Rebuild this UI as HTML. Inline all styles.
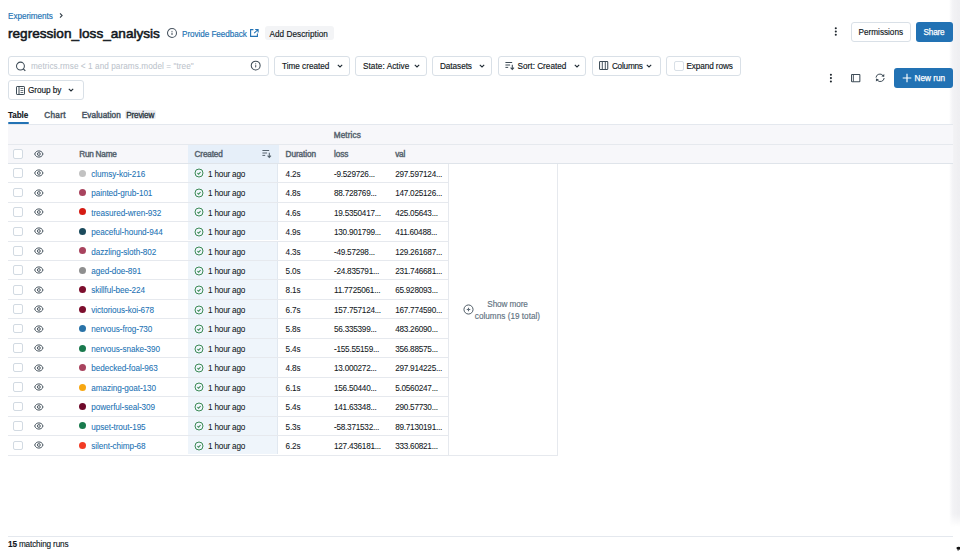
<!DOCTYPE html>
<html><head><meta charset="utf-8">
<style>
html,body{margin:0;padding:0;background:#fff;width:960px;height:551px;overflow:hidden;}
body{position:relative;font-family:"Liberation Sans",sans-serif;}
.t{position:absolute;line-height:1;white-space:nowrap;}
.r{position:absolute;}
svg.r{overflow:visible;}
</style></head><body>
<div class="r" style="left:948.50px;top:0.00px;width:11.50px;height:527.00px;background:linear-gradient(to right, rgba(240,240,243,0), rgba(240,240,243,0.85) 35%, rgba(238,238,241,1));-webkit-mask-image:linear-gradient(to bottom, #000 97.5%, transparent);mask-image:linear-gradient(to bottom, #000 97.5%, transparent);"></div>
<div class="t" style="left:8.00px;top:13.36px;font-size:8.2px;color:#2272b4;font-weight:400;letter-spacing:-0.059px;-webkit-text-stroke:0.15px #2272b4;">Experiments</div>
<svg class="r" style="left:57.5px;top:12px" width="6" height="7" viewBox="0 0 6 7"><path d="M2 1.4 L4.1 3.5 L2 5.6" fill="none" stroke="#36414b" stroke-width="1.1"/></svg>
<div class="t" style="left:8.00px;top:26.69px;font-size:13.6px;color:#11171c;font-weight:400;letter-spacing:0.001px;-webkit-text-stroke:0.55px #11171c;">regression_loss_analysis</div>
<svg class="r" style="left:165.9px;top:26.8px" width="12" height="12" viewBox="0 0 12 12"><circle cx="6" cy="6" r="4.5" fill="none" stroke="#4a5662" stroke-width="1.05"/><rect x="5.45" y="5.5" width="1.1" height="2.5" rx="0.5" fill="#4a5662"/><circle cx="6" cy="4.3" r="0.6" fill="#4a5662"/></svg>
<div class="t" style="left:182.00px;top:30.86px;font-size:8.2px;color:#2272b4;font-weight:400;letter-spacing:-0.076px;-webkit-text-stroke:0.15px #2272b4;">Provide Feedback</div>
<svg class="r" style="left:249px;top:27.7px" width="10" height="10" viewBox="0 0 10 10"><path d="M4.4 1.6 H1.6 V8.4 H8.4 V5.6" fill="none" stroke="#2272b4" stroke-width="1.1"/><path d="M6.2 1.5 H9.1 V4.4 M8.9 1.7 L5.2 5.2" fill="none" stroke="#2272b4" stroke-width="1.1"/></svg>
<div class="r" style="left:265.00px;top:26.00px;width:68.50px;height:13.70px;background:#f3f4f6;border-radius:3px;"></div>
<div class="t" style="left:269.50px;top:30.86px;font-size:8.2px;color:#11171c;font-weight:400;letter-spacing:0.043px;-webkit-text-stroke:0.15px #11171c;">Add Description</div>
<svg class="r" style="left:830px;top:22px" width="12" height="20" viewBox="0 0 12 20"><circle cx="5.8" cy="6.2" r="1.05" fill="#1f272e"/><circle cx="5.8" cy="9.45" r="1.05" fill="#1f272e"/><circle cx="5.8" cy="12.7" r="1.05" fill="#1f272e"/></svg>
<div class="r" style="left:850.60px;top:22.00px;width:60.10px;height:19.90px;border:1px solid #d9e0e7;border-radius:3px;box-sizing:border-box;background:#fff;"></div>
<div class="t" style="left:858.60px;top:28.66px;font-size:8.2px;color:#11171c;font-weight:400;letter-spacing:-0.015px;-webkit-text-stroke:0.15px #11171c;">Permissions</div>
<div class="r" style="left:915.80px;top:22.00px;width:37.00px;height:19.90px;background:#2272b4;border-radius:3px;"></div>
<div class="t" style="left:923.50px;top:28.66px;font-size:8.2px;color:#fff;font-weight:400;letter-spacing:-0.173px;-webkit-text-stroke:0.25px #fff;">Share</div>
<div class="r" style="left:8.00px;top:56.30px;width:260.80px;height:19.70px;border:1px solid #d9e0e7;border-radius:3px;box-sizing:border-box;background:#fff;"></div>
<svg class="r" style="left:15px;top:60.5px" width="12" height="12" viewBox="0 0 12 12"><circle cx="5.45" cy="5.05" r="3.95" fill="none" stroke="#3e4c57" stroke-width="1.05"/><path d="M8.3 7.9 L10.3 9.9" stroke="#3e4c57" stroke-width="1.2"/></svg>
<div class="t" style="left:30.90px;top:62.56px;font-size:8.2px;color:#bcc4cc;font-weight:400;letter-spacing:0.066px;-webkit-text-stroke:0.05px #bcc4cc;">metrics.rmse &lt; 1 and params.model = "tree"</div>
<svg class="r" style="left:250.3px;top:59.5px" width="11" height="11" viewBox="0 0 11 11"><circle cx="5.7" cy="5.6" r="4.45" fill="none" stroke="#3e4c57" stroke-width="1.05"/><rect x="5.2" y="5.0" width="1.0" height="2.4" rx="0.4" fill="#3e4c57"/><circle cx="5.7" cy="3.85" r="0.55" fill="#3e4c57"/></svg>
<div class="r" style="left:273.80px;top:56.30px;width:76.40px;height:19.70px;border:1px solid #d9e0e7;border-radius:3px;box-sizing:border-box;background:#fff;"></div>
<div class="t" style="left:282.00px;top:62.56px;font-size:8.2px;color:#11171c;font-weight:400;letter-spacing:-0.015px;-webkit-text-stroke:0.15px #11171c;">Time created</div>
<svg class="r" style="left:336.50px;top:64.00px" width="6" height="4" viewBox="0 0 6 4"><path d="M0.8 0.9 L3 3.0 L5.2 0.9" fill="none" stroke="#1f2a33" stroke-width="1.1"/></svg>
<div class="r" style="left:355.00px;top:56.30px;width:72.30px;height:19.70px;border:1px solid #d9e0e7;border-radius:3px;box-sizing:border-box;background:#fff;"></div>
<div class="t" style="left:363.00px;top:62.56px;font-size:8.2px;color:#11171c;font-weight:400;letter-spacing:0.067px;-webkit-text-stroke:0.15px #11171c;">State: Active</div>
<svg class="r" style="left:413.80px;top:64.00px" width="6" height="4" viewBox="0 0 6 4"><path d="M0.8 0.9 L3 3.0 L5.2 0.9" fill="none" stroke="#1f2a33" stroke-width="1.1"/></svg>
<div class="r" style="left:432.40px;top:56.30px;width:59.90px;height:19.70px;border:1px solid #d9e0e7;border-radius:3px;box-sizing:border-box;background:#fff;"></div>
<div class="t" style="left:440.00px;top:62.56px;font-size:8.2px;color:#11171c;font-weight:400;letter-spacing:-0.050px;-webkit-text-stroke:0.15px #11171c;">Datasets</div>
<svg class="r" style="left:479.20px;top:64.00px" width="6" height="4" viewBox="0 0 6 4"><path d="M0.8 0.9 L3 3.0 L5.2 0.9" fill="none" stroke="#1f2a33" stroke-width="1.1"/></svg>
<div class="r" style="left:497.60px;top:56.30px;width:88.80px;height:19.70px;border:1px solid #d9e0e7;border-radius:3px;box-sizing:border-box;background:#fff;"></div>
<svg class="r" style="left:505px;top:61px" width="11" height="10" viewBox="0 0 11 10"><path d="M0.8 1.5 H6.75 M0.8 4.0 H4.7 M0.8 6.4 H2.8" stroke="#3e4c57" stroke-width="1" stroke-linecap="round"/><path d="M7.3 3.8 V8.4 M5.6 6.7 L7.3 8.4 L9.0 6.7" fill="none" stroke="#3e4c57" stroke-width="1.05"/></svg>
<div class="t" style="left:517.60px;top:62.56px;font-size:8.2px;color:#11171c;font-weight:400;letter-spacing:0.004px;-webkit-text-stroke:0.15px #11171c;">Sort: Created</div>
<svg class="r" style="left:573.50px;top:64.00px" width="6" height="4" viewBox="0 0 6 4"><path d="M0.8 0.9 L3 3.0 L5.2 0.9" fill="none" stroke="#1f2a33" stroke-width="1.1"/></svg>
<div class="r" style="left:591.60px;top:56.30px;width:69.60px;height:19.70px;border:1px solid #d9e0e7;border-radius:3px;box-sizing:border-box;background:#fff;"></div>
<svg class="r" style="left:599.4px;top:61.2px" width="10" height="10" viewBox="0 0 10 10"><rect x="0.55" y="0.55" width="8.2" height="7.9" rx="0.6" fill="none" stroke="#3e4c57" stroke-width="1.05"/><path d="M3.3 0.6 V8.4 M6.3 0.6 V8.4" stroke="#3e4c57" stroke-width="0.95"/></svg>
<div class="t" style="left:611.90px;top:62.56px;font-size:8.2px;color:#11171c;font-weight:400;letter-spacing:-0.208px;-webkit-text-stroke:0.15px #11171c;">Columns</div>
<svg class="r" style="left:645.80px;top:64.00px" width="6" height="4" viewBox="0 0 6 4"><path d="M0.8 0.9 L3 3.0 L5.2 0.9" fill="none" stroke="#1f2a33" stroke-width="1.1"/></svg>
<div class="r" style="left:666.00px;top:56.30px;width:74.50px;height:19.70px;border:1px solid #d9e0e7;border-radius:3px;box-sizing:border-box;background:#fff;"></div>
<div class="r" style="left:674.20px;top:61.00px;width:9.50px;height:9.50px;border:1px solid #d9e0e7;border-radius:2px;box-sizing:border-box;background:#fff;"></div>
<div class="t" style="left:686.40px;top:62.56px;font-size:8.2px;color:#11171c;font-weight:400;letter-spacing:-0.080px;-webkit-text-stroke:0.15px #11171c;">Expand rows</div>
<div class="r" style="left:8.00px;top:80.20px;width:75.60px;height:20.00px;border:1px solid #d9e0e7;border-radius:3px;box-sizing:border-box;background:#fff;"></div>
<svg class="r" style="left:16px;top:86px" width="9" height="9" viewBox="0 0 9 9"><rect x="0.5" y="0.5" width="8" height="8" rx="0.6" fill="none" stroke="#3e4c57" stroke-width="1"/><path d="M3 0.5 V8.5" stroke="#3e4c57" stroke-width="1"/><path d="M4.5 2.5 H7.3 M4.5 4.5 H7.3 M4.5 6.5 H7.3" stroke="#3e4c57" stroke-width="0.8"/></svg>
<div class="t" style="left:28.00px;top:87.26px;font-size:8.2px;color:#11171c;font-weight:400;letter-spacing:-0.035px;-webkit-text-stroke:0.15px #11171c;">Group by</div>
<svg class="r" style="left:68.40px;top:88.40px" width="6" height="4" viewBox="0 0 6 4"><path d="M0.8 0.9 L3 3.0 L5.2 0.9" fill="none" stroke="#1f2a33" stroke-width="1.1"/></svg>
<svg class="r" style="left:825px;top:68px" width="12" height="20" viewBox="0 0 12 20"><circle cx="5.9" cy="6.7" r="1.05" fill="#1f272e"/><circle cx="5.9" cy="10.1" r="1.05" fill="#1f272e"/><circle cx="5.9" cy="13.5" r="1.05" fill="#1f272e"/></svg>
<svg class="r" style="left:850.6px;top:74.2px" width="10" height="10" viewBox="0 0 10 10"><rect x="0.55" y="0.55" width="8.3" height="7.1" rx="0.5" fill="none" stroke="#3e4c57" stroke-width="1.05"/><path d="M2.4 0.5 V7.7" stroke="#3e4c57" stroke-width="0.9"/></svg>
<svg class="r" style="left:874.5px;top:73px" width="10" height="10" viewBox="0 0 10 10"><path d="M1.0 4.6 A3.9 3.9 0 0 1 8.0 2.6" fill="none" stroke="#3e4c57" stroke-width="1"/><path d="M9.3 1.0 L9.2 4.0 L6.3 3.2 Z" fill="#3e4c57"/><path d="M9.2 5.0 A3.9 3.9 0 0 1 2.2 7.0" fill="none" stroke="#3e4c57" stroke-width="1"/><path d="M0.9 8.6 L1.0 5.6 L3.9 6.4 Z" fill="#3e4c57"/></svg>
<div class="r" style="left:894.00px;top:68.30px;width:58.70px;height:19.70px;background:#2272b4;border-radius:3px;"></div>
<svg class="r" style="left:902px;top:73px" width="10" height="10" viewBox="0 0 10 10"><path d="M5 0.7 V9.3 M0.7 5 H9.3" stroke="#fff" stroke-width="1.15"/></svg>
<div class="t" style="left:914.50px;top:74.86px;font-size:8.2px;color:#fff;font-weight:400;letter-spacing:0.009px;-webkit-text-stroke:0.25px #fff;">New run</div>
<div class="t" style="left:8.00px;top:111.66px;font-size:8.2px;color:#11171c;font-weight:700;letter-spacing:-0.132px;-webkit-text-stroke:0.1px #11171c;">Table</div>
<div class="r" style="left:8.00px;top:121.70px;width:20.50px;height:2.10px;background:#2272b4;border-radius:1px;"></div>
<div class="t" style="left:44.30px;top:111.66px;font-size:8.2px;color:#4b5864;font-weight:400;letter-spacing:0.288px;-webkit-text-stroke:0.45px #4b5864;">Chart</div>
<div class="t" style="left:81.80px;top:111.66px;font-size:8.2px;color:#4b5864;font-weight:400;letter-spacing:0.078px;-webkit-text-stroke:0.45px #4b5864;">Evaluation</div>
<div class="r" style="left:124.90px;top:109.90px;width:30.90px;height:9.00px;background:#eceef1;border-radius:2px;"></div>
<div class="t" style="left:126.20px;top:111.66px;font-size:8.2px;color:#27313a;font-weight:400;letter-spacing:-0.165px;-webkit-text-stroke:0.3px #27313a;">Preview</div>
<div class="r" style="left:8.00px;top:123.70px;width:945.00px;height:1.00px;background:#e4e8ee;"></div>
<div class="r" style="left:8.00px;top:124.70px;width:945.00px;height:19.70px;background:#f7f7fa;"></div>
<div class="r" style="left:8.00px;top:144.40px;width:945.00px;height:0.80px;background:#e6e9ee;"></div>
<div class="r" style="left:8.00px;top:145.20px;width:945.00px;height:17.90px;background:#f7f7fa;"></div>
<div class="r" style="left:188.20px;top:145.20px;width:90.40px;height:17.50px;background:#e6eff9;"></div>
<div class="r" style="left:8.00px;top:162.70px;width:945.00px;height:1.00px;background:#dfe4ea;"></div>
<div class="t" style="left:333.75px;top:132.16px;font-size:8.2px;color:#56636e;font-weight:400;letter-spacing:0.099px;-webkit-text-stroke:0.42px #56636e;">Metrics</div>
<div class="r" style="left:13.00px;top:149.10px;width:9.50px;height:9.70px;border:1px solid #d2dae2;border-radius:2px;box-sizing:border-box;background:#fff;"></div>
<svg class="r" style="left:34px;top:150px" width="10" height="8" viewBox="0 0 10 8"><path d="M0.7 4 C1.45 1.75 3.05 0.95 4.85 0.95 C6.65 0.95 8.25 1.75 9.0 4 C8.25 6.25 6.65 7.05 4.85 7.05 C3.05 7.05 1.45 6.25 0.7 4 Z" fill="none" stroke="#3e4c57" stroke-width="1"/><circle cx="4.85" cy="4" r="1.4" fill="none" stroke="#3e4c57" stroke-width="0.95"/></svg>
<div class="t" style="left:79.20px;top:151.36px;font-size:8.2px;color:#56636e;font-weight:400;letter-spacing:-0.220px;-webkit-text-stroke:0.42px #56636e;">Run Name</div>
<div class="t" style="left:194.60px;top:151.36px;font-size:8.2px;color:#56636e;font-weight:400;letter-spacing:-0.149px;-webkit-text-stroke:0.42px #56636e;">Created</div>
<svg class="r" style="left:261.6px;top:148.8px" width="11" height="10" viewBox="0 0 11 10"><path d="M0.8 1.5 H6.75 M0.8 4.0 H4.7 M0.8 6.4 H2.8" stroke="#56636e" stroke-width="1" stroke-linecap="round"/><path d="M7.3 3.8 V8.4 M5.6 6.7 L7.3 8.4 L9.0 6.7" fill="none" stroke="#56636e" stroke-width="1.05"/></svg>
<div class="t" style="left:285.60px;top:151.36px;font-size:8.2px;color:#56636e;font-weight:400;letter-spacing:-0.057px;-webkit-text-stroke:0.42px #56636e;">Duration</div>
<div class="t" style="left:334.00px;top:151.36px;font-size:8.2px;color:#56636e;font-weight:400;letter-spacing:-0.099px;-webkit-text-stroke:0.42px #56636e;">loss</div>
<div class="t" style="left:395.20px;top:151.36px;font-size:8.2px;color:#56636e;font-weight:400;letter-spacing:-0.220px;-webkit-text-stroke:0.42px #56636e;">val</div>
<div class="r" style="left:188.20px;top:163.70px;width:89.30px;height:18.45px;background:#eff5fb;"></div>
<div class="r" style="left:277.10px;top:163.70px;width:0.80px;height:18.45px;background:#e1e8f0;"></div>
<div class="r" style="left:8.00px;top:182.15px;width:440.40px;height:1.00px;background:#e6e9ee;"></div>
<div class="r" style="left:13.00px;top:168.18px;width:9.50px;height:9.70px;border:1px solid #d2dae2;border-radius:2px;box-sizing:border-box;background:#fff;"></div>
<svg class="r" style="left:34px;top:169px" width="10" height="8" viewBox="0 0 10 8"><path d="M0.7 4 C1.45 1.75 3.05 0.95 4.85 0.95 C6.65 0.95 8.25 1.75 9.0 4 C8.25 6.25 6.65 7.05 4.85 7.05 C3.05 7.05 1.45 6.25 0.7 4 Z" fill="none" stroke="#3e4c57" stroke-width="1"/><circle cx="4.85" cy="4" r="1.4" fill="none" stroke="#3e4c57" stroke-width="0.95"/></svg>
<div class="r" style="left:79.00px;top:169.58px;width:7.00px;height:7.00px;background:#c2c2c2;border-radius:50%;"></div>
<div class="t" style="left:91.25px;top:170.74px;font-size:8.2px;color:#2272b4;font-weight:400;letter-spacing:-0.080px;-webkit-text-stroke:0.06px #2272b4;">clumsy-koi-216</div>
<svg class="r" style="left:193.60px;top:168.48px" width="10" height="10" viewBox="0 0 10 10"><circle cx="5" cy="5" r="4.0" fill="none" stroke="#3b8a55" stroke-width="1"/><path d="M3.4 5.2 L4.6 6.2 L6.6 4.0" fill="none" stroke="#3b8a55" stroke-width="1.05"/></svg>
<div class="t" style="left:208.00px;top:170.74px;font-size:8.2px;color:#11171c;font-weight:400;letter-spacing:-0.200px;-webkit-text-stroke:0.06px #11171c;">1 hour ago</div>
<div class="t" style="left:285.60px;top:170.74px;font-size:8.2px;color:#11171c;font-weight:400;letter-spacing:-0.200px;-webkit-text-stroke:0.06px #11171c;">4.2s</div>
<div class="t" style="left:334.00px;top:170.74px;font-size:8.2px;color:#11171c;font-weight:400;letter-spacing:-0.250px;-webkit-text-stroke:0.06px #11171c;">-9.529726...</div>
<div class="t" style="left:395.20px;top:170.74px;font-size:8.2px;color:#11171c;font-weight:400;letter-spacing:-0.250px;-webkit-text-stroke:0.06px #11171c;">297.597124...</div>
<div class="r" style="left:188.20px;top:183.15px;width:89.30px;height:18.45px;background:#eff5fb;"></div>
<div class="r" style="left:277.10px;top:183.15px;width:0.80px;height:18.45px;background:#e1e8f0;"></div>
<div class="r" style="left:8.00px;top:201.61px;width:440.40px;height:1.00px;background:#e6e9ee;"></div>
<div class="r" style="left:13.00px;top:187.63px;width:9.50px;height:9.70px;border:1px solid #d2dae2;border-radius:2px;box-sizing:border-box;background:#fff;"></div>
<svg class="r" style="left:34px;top:189px" width="10" height="8" viewBox="0 0 10 8"><path d="M0.7 4 C1.45 1.75 3.05 0.95 4.85 0.95 C6.65 0.95 8.25 1.75 9.0 4 C8.25 6.25 6.65 7.05 4.85 7.05 C3.05 7.05 1.45 6.25 0.7 4 Z" fill="none" stroke="#3e4c57" stroke-width="1"/><circle cx="4.85" cy="4" r="1.4" fill="none" stroke="#3e4c57" stroke-width="0.95"/></svg>
<div class="r" style="left:79.00px;top:189.03px;width:7.00px;height:7.00px;background:#a8435e;border-radius:50%;"></div>
<div class="t" style="left:91.25px;top:190.19px;font-size:8.2px;color:#2272b4;font-weight:400;letter-spacing:-0.080px;-webkit-text-stroke:0.06px #2272b4;">painted-grub-101</div>
<svg class="r" style="left:193.60px;top:187.93px" width="10" height="10" viewBox="0 0 10 10"><circle cx="5" cy="5" r="4.0" fill="none" stroke="#3b8a55" stroke-width="1"/><path d="M3.4 5.2 L4.6 6.2 L6.6 4.0" fill="none" stroke="#3b8a55" stroke-width="1.05"/></svg>
<div class="t" style="left:208.00px;top:190.19px;font-size:8.2px;color:#11171c;font-weight:400;letter-spacing:-0.200px;-webkit-text-stroke:0.06px #11171c;">1 hour ago</div>
<div class="t" style="left:285.60px;top:190.19px;font-size:8.2px;color:#11171c;font-weight:400;letter-spacing:-0.200px;-webkit-text-stroke:0.06px #11171c;">4.8s</div>
<div class="t" style="left:334.00px;top:190.19px;font-size:8.2px;color:#11171c;font-weight:400;letter-spacing:-0.250px;-webkit-text-stroke:0.06px #11171c;">88.728769...</div>
<div class="t" style="left:395.20px;top:190.19px;font-size:8.2px;color:#11171c;font-weight:400;letter-spacing:-0.250px;-webkit-text-stroke:0.06px #11171c;">147.025126...</div>
<div class="r" style="left:188.20px;top:202.61px;width:89.30px;height:18.45px;background:#eff5fb;"></div>
<div class="r" style="left:277.10px;top:202.61px;width:0.80px;height:18.45px;background:#e1e8f0;"></div>
<div class="r" style="left:8.00px;top:221.06px;width:440.40px;height:1.00px;background:#e6e9ee;"></div>
<div class="r" style="left:13.00px;top:207.08px;width:9.50px;height:9.70px;border:1px solid #d2dae2;border-radius:2px;box-sizing:border-box;background:#fff;"></div>
<svg class="r" style="left:34px;top:208px" width="10" height="8" viewBox="0 0 10 8"><path d="M0.7 4 C1.45 1.75 3.05 0.95 4.85 0.95 C6.65 0.95 8.25 1.75 9.0 4 C8.25 6.25 6.65 7.05 4.85 7.05 C3.05 7.05 1.45 6.25 0.7 4 Z" fill="none" stroke="#3e4c57" stroke-width="1"/><circle cx="4.85" cy="4" r="1.4" fill="none" stroke="#3e4c57" stroke-width="0.95"/></svg>
<div class="r" style="left:79.00px;top:208.48px;width:7.00px;height:7.00px;background:#d51c14;border-radius:50%;"></div>
<div class="t" style="left:91.25px;top:209.64px;font-size:8.2px;color:#2272b4;font-weight:400;letter-spacing:-0.080px;-webkit-text-stroke:0.06px #2272b4;">treasured-wren-932</div>
<svg class="r" style="left:193.60px;top:207.38px" width="10" height="10" viewBox="0 0 10 10"><circle cx="5" cy="5" r="4.0" fill="none" stroke="#3b8a55" stroke-width="1"/><path d="M3.4 5.2 L4.6 6.2 L6.6 4.0" fill="none" stroke="#3b8a55" stroke-width="1.05"/></svg>
<div class="t" style="left:208.00px;top:209.64px;font-size:8.2px;color:#11171c;font-weight:400;letter-spacing:-0.200px;-webkit-text-stroke:0.06px #11171c;">1 hour ago</div>
<div class="t" style="left:285.60px;top:209.64px;font-size:8.2px;color:#11171c;font-weight:400;letter-spacing:-0.200px;-webkit-text-stroke:0.06px #11171c;">4.6s</div>
<div class="t" style="left:334.00px;top:209.64px;font-size:8.2px;color:#11171c;font-weight:400;letter-spacing:-0.250px;-webkit-text-stroke:0.06px #11171c;">19.5350417...</div>
<div class="t" style="left:395.20px;top:209.64px;font-size:8.2px;color:#11171c;font-weight:400;letter-spacing:-0.250px;-webkit-text-stroke:0.06px #11171c;">425.05643...</div>
<div class="r" style="left:188.20px;top:222.06px;width:89.30px;height:18.45px;background:#eff5fb;"></div>
<div class="r" style="left:277.10px;top:222.06px;width:0.80px;height:18.45px;background:#e1e8f0;"></div>
<div class="r" style="left:8.00px;top:240.51px;width:440.40px;height:1.00px;background:#e6e9ee;"></div>
<div class="r" style="left:13.00px;top:226.54px;width:9.50px;height:9.70px;border:1px solid #d2dae2;border-radius:2px;box-sizing:border-box;background:#fff;"></div>
<svg class="r" style="left:34px;top:227px" width="10" height="8" viewBox="0 0 10 8"><path d="M0.7 4 C1.45 1.75 3.05 0.95 4.85 0.95 C6.65 0.95 8.25 1.75 9.0 4 C8.25 6.25 6.65 7.05 4.85 7.05 C3.05 7.05 1.45 6.25 0.7 4 Z" fill="none" stroke="#3e4c57" stroke-width="1"/><circle cx="4.85" cy="4" r="1.4" fill="none" stroke="#3e4c57" stroke-width="0.95"/></svg>
<div class="r" style="left:79.00px;top:227.94px;width:7.00px;height:7.00px;background:#1b4a5c;border-radius:50%;"></div>
<div class="t" style="left:91.25px;top:229.10px;font-size:8.2px;color:#2272b4;font-weight:400;letter-spacing:-0.080px;-webkit-text-stroke:0.06px #2272b4;">peaceful-hound-944</div>
<svg class="r" style="left:193.60px;top:226.84px" width="10" height="10" viewBox="0 0 10 10"><circle cx="5" cy="5" r="4.0" fill="none" stroke="#3b8a55" stroke-width="1"/><path d="M3.4 5.2 L4.6 6.2 L6.6 4.0" fill="none" stroke="#3b8a55" stroke-width="1.05"/></svg>
<div class="t" style="left:208.00px;top:229.10px;font-size:8.2px;color:#11171c;font-weight:400;letter-spacing:-0.200px;-webkit-text-stroke:0.06px #11171c;">1 hour ago</div>
<div class="t" style="left:285.60px;top:229.10px;font-size:8.2px;color:#11171c;font-weight:400;letter-spacing:-0.200px;-webkit-text-stroke:0.06px #11171c;">4.9s</div>
<div class="t" style="left:334.00px;top:229.10px;font-size:8.2px;color:#11171c;font-weight:400;letter-spacing:-0.250px;-webkit-text-stroke:0.06px #11171c;">130.901799...</div>
<div class="t" style="left:395.20px;top:229.10px;font-size:8.2px;color:#11171c;font-weight:400;letter-spacing:-0.250px;-webkit-text-stroke:0.06px #11171c;">411.60488...</div>
<div class="r" style="left:188.20px;top:241.51px;width:89.30px;height:18.45px;background:#eff5fb;"></div>
<div class="r" style="left:277.10px;top:241.51px;width:0.80px;height:18.45px;background:#e1e8f0;"></div>
<div class="r" style="left:8.00px;top:259.97px;width:440.40px;height:1.00px;background:#e6e9ee;"></div>
<div class="r" style="left:13.00px;top:245.99px;width:9.50px;height:9.70px;border:1px solid #d2dae2;border-radius:2px;box-sizing:border-box;background:#fff;"></div>
<svg class="r" style="left:34px;top:247px" width="10" height="8" viewBox="0 0 10 8"><path d="M0.7 4 C1.45 1.75 3.05 0.95 4.85 0.95 C6.65 0.95 8.25 1.75 9.0 4 C8.25 6.25 6.65 7.05 4.85 7.05 C3.05 7.05 1.45 6.25 0.7 4 Z" fill="none" stroke="#3e4c57" stroke-width="1"/><circle cx="4.85" cy="4" r="1.4" fill="none" stroke="#3e4c57" stroke-width="0.95"/></svg>
<div class="r" style="left:79.00px;top:247.39px;width:7.00px;height:7.00px;background:#a8435e;border-radius:50%;"></div>
<div class="t" style="left:91.25px;top:248.55px;font-size:8.2px;color:#2272b4;font-weight:400;letter-spacing:-0.080px;-webkit-text-stroke:0.06px #2272b4;">dazzling-sloth-802</div>
<svg class="r" style="left:193.60px;top:246.29px" width="10" height="10" viewBox="0 0 10 10"><circle cx="5" cy="5" r="4.0" fill="none" stroke="#3b8a55" stroke-width="1"/><path d="M3.4 5.2 L4.6 6.2 L6.6 4.0" fill="none" stroke="#3b8a55" stroke-width="1.05"/></svg>
<div class="t" style="left:208.00px;top:248.55px;font-size:8.2px;color:#11171c;font-weight:400;letter-spacing:-0.200px;-webkit-text-stroke:0.06px #11171c;">1 hour ago</div>
<div class="t" style="left:285.60px;top:248.55px;font-size:8.2px;color:#11171c;font-weight:400;letter-spacing:-0.200px;-webkit-text-stroke:0.06px #11171c;">4.3s</div>
<div class="t" style="left:334.00px;top:248.55px;font-size:8.2px;color:#11171c;font-weight:400;letter-spacing:-0.250px;-webkit-text-stroke:0.06px #11171c;">-49.57298...</div>
<div class="t" style="left:395.20px;top:248.55px;font-size:8.2px;color:#11171c;font-weight:400;letter-spacing:-0.250px;-webkit-text-stroke:0.06px #11171c;">129.261687...</div>
<div class="r" style="left:188.20px;top:260.97px;width:89.30px;height:18.45px;background:#eff5fb;"></div>
<div class="r" style="left:277.10px;top:260.97px;width:0.80px;height:18.45px;background:#e1e8f0;"></div>
<div class="r" style="left:8.00px;top:279.42px;width:440.40px;height:1.00px;background:#e6e9ee;"></div>
<div class="r" style="left:13.00px;top:265.44px;width:9.50px;height:9.70px;border:1px solid #d2dae2;border-radius:2px;box-sizing:border-box;background:#fff;"></div>
<svg class="r" style="left:34px;top:266px" width="10" height="8" viewBox="0 0 10 8"><path d="M0.7 4 C1.45 1.75 3.05 0.95 4.85 0.95 C6.65 0.95 8.25 1.75 9.0 4 C8.25 6.25 6.65 7.05 4.85 7.05 C3.05 7.05 1.45 6.25 0.7 4 Z" fill="none" stroke="#3e4c57" stroke-width="1"/><circle cx="4.85" cy="4" r="1.4" fill="none" stroke="#3e4c57" stroke-width="0.95"/></svg>
<div class="r" style="left:79.00px;top:266.84px;width:7.00px;height:7.00px;background:#8f8f8f;border-radius:50%;"></div>
<div class="t" style="left:91.25px;top:268.00px;font-size:8.2px;color:#2272b4;font-weight:400;letter-spacing:-0.080px;-webkit-text-stroke:0.06px #2272b4;">aged-doe-891</div>
<svg class="r" style="left:193.60px;top:265.74px" width="10" height="10" viewBox="0 0 10 10"><circle cx="5" cy="5" r="4.0" fill="none" stroke="#3b8a55" stroke-width="1"/><path d="M3.4 5.2 L4.6 6.2 L6.6 4.0" fill="none" stroke="#3b8a55" stroke-width="1.05"/></svg>
<div class="t" style="left:208.00px;top:268.00px;font-size:8.2px;color:#11171c;font-weight:400;letter-spacing:-0.200px;-webkit-text-stroke:0.06px #11171c;">1 hour ago</div>
<div class="t" style="left:285.60px;top:268.00px;font-size:8.2px;color:#11171c;font-weight:400;letter-spacing:-0.200px;-webkit-text-stroke:0.06px #11171c;">5.0s</div>
<div class="t" style="left:334.00px;top:268.00px;font-size:8.2px;color:#11171c;font-weight:400;letter-spacing:-0.250px;-webkit-text-stroke:0.06px #11171c;">-24.835791...</div>
<div class="t" style="left:395.20px;top:268.00px;font-size:8.2px;color:#11171c;font-weight:400;letter-spacing:-0.250px;-webkit-text-stroke:0.06px #11171c;">231.746681...</div>
<div class="r" style="left:188.20px;top:280.42px;width:89.30px;height:18.45px;background:#eff5fb;"></div>
<div class="r" style="left:277.10px;top:280.42px;width:0.80px;height:18.45px;background:#e1e8f0;"></div>
<div class="r" style="left:8.00px;top:298.87px;width:440.40px;height:1.00px;background:#e6e9ee;"></div>
<div class="r" style="left:13.00px;top:284.90px;width:9.50px;height:9.70px;border:1px solid #d2dae2;border-radius:2px;box-sizing:border-box;background:#fff;"></div>
<svg class="r" style="left:34px;top:286px" width="10" height="8" viewBox="0 0 10 8"><path d="M0.7 4 C1.45 1.75 3.05 0.95 4.85 0.95 C6.65 0.95 8.25 1.75 9.0 4 C8.25 6.25 6.65 7.05 4.85 7.05 C3.05 7.05 1.45 6.25 0.7 4 Z" fill="none" stroke="#3e4c57" stroke-width="1"/><circle cx="4.85" cy="4" r="1.4" fill="none" stroke="#3e4c57" stroke-width="0.95"/></svg>
<div class="r" style="left:79.00px;top:286.30px;width:7.00px;height:7.00px;background:#7d0f2e;border-radius:50%;"></div>
<div class="t" style="left:91.25px;top:287.46px;font-size:8.2px;color:#2272b4;font-weight:400;letter-spacing:-0.080px;-webkit-text-stroke:0.06px #2272b4;">skillful-bee-224</div>
<svg class="r" style="left:193.60px;top:285.20px" width="10" height="10" viewBox="0 0 10 10"><circle cx="5" cy="5" r="4.0" fill="none" stroke="#3b8a55" stroke-width="1"/><path d="M3.4 5.2 L4.6 6.2 L6.6 4.0" fill="none" stroke="#3b8a55" stroke-width="1.05"/></svg>
<div class="t" style="left:208.00px;top:287.46px;font-size:8.2px;color:#11171c;font-weight:400;letter-spacing:-0.200px;-webkit-text-stroke:0.06px #11171c;">1 hour ago</div>
<div class="t" style="left:285.60px;top:287.46px;font-size:8.2px;color:#11171c;font-weight:400;letter-spacing:-0.200px;-webkit-text-stroke:0.06px #11171c;">8.1s</div>
<div class="t" style="left:334.00px;top:287.46px;font-size:8.2px;color:#11171c;font-weight:400;letter-spacing:-0.250px;-webkit-text-stroke:0.06px #11171c;">11.7725061...</div>
<div class="t" style="left:395.20px;top:287.46px;font-size:8.2px;color:#11171c;font-weight:400;letter-spacing:-0.250px;-webkit-text-stroke:0.06px #11171c;">65.928093...</div>
<div class="r" style="left:188.20px;top:299.87px;width:89.30px;height:18.45px;background:#eff5fb;"></div>
<div class="r" style="left:277.10px;top:299.87px;width:0.80px;height:18.45px;background:#e1e8f0;"></div>
<div class="r" style="left:8.00px;top:318.33px;width:440.40px;height:1.00px;background:#e6e9ee;"></div>
<div class="r" style="left:13.00px;top:304.35px;width:9.50px;height:9.70px;border:1px solid #d2dae2;border-radius:2px;box-sizing:border-box;background:#fff;"></div>
<svg class="r" style="left:34px;top:305px" width="10" height="8" viewBox="0 0 10 8"><path d="M0.7 4 C1.45 1.75 3.05 0.95 4.85 0.95 C6.65 0.95 8.25 1.75 9.0 4 C8.25 6.25 6.65 7.05 4.85 7.05 C3.05 7.05 1.45 6.25 0.7 4 Z" fill="none" stroke="#3e4c57" stroke-width="1"/><circle cx="4.85" cy="4" r="1.4" fill="none" stroke="#3e4c57" stroke-width="0.95"/></svg>
<div class="r" style="left:79.00px;top:305.75px;width:7.00px;height:7.00px;background:#7d0f2e;border-radius:50%;"></div>
<div class="t" style="left:91.25px;top:306.91px;font-size:8.2px;color:#2272b4;font-weight:400;letter-spacing:-0.080px;-webkit-text-stroke:0.06px #2272b4;">victorious-koi-678</div>
<svg class="r" style="left:193.60px;top:304.65px" width="10" height="10" viewBox="0 0 10 10"><circle cx="5" cy="5" r="4.0" fill="none" stroke="#3b8a55" stroke-width="1"/><path d="M3.4 5.2 L4.6 6.2 L6.6 4.0" fill="none" stroke="#3b8a55" stroke-width="1.05"/></svg>
<div class="t" style="left:208.00px;top:306.91px;font-size:8.2px;color:#11171c;font-weight:400;letter-spacing:-0.200px;-webkit-text-stroke:0.06px #11171c;">1 hour ago</div>
<div class="t" style="left:285.60px;top:306.91px;font-size:8.2px;color:#11171c;font-weight:400;letter-spacing:-0.200px;-webkit-text-stroke:0.06px #11171c;">6.7s</div>
<div class="t" style="left:334.00px;top:306.91px;font-size:8.2px;color:#11171c;font-weight:400;letter-spacing:-0.250px;-webkit-text-stroke:0.06px #11171c;">157.757124...</div>
<div class="t" style="left:395.20px;top:306.91px;font-size:8.2px;color:#11171c;font-weight:400;letter-spacing:-0.250px;-webkit-text-stroke:0.06px #11171c;">167.774590...</div>
<div class="r" style="left:188.20px;top:319.33px;width:89.30px;height:18.45px;background:#eff5fb;"></div>
<div class="r" style="left:277.10px;top:319.33px;width:0.80px;height:18.45px;background:#e1e8f0;"></div>
<div class="r" style="left:8.00px;top:337.78px;width:440.40px;height:1.00px;background:#e6e9ee;"></div>
<div class="r" style="left:13.00px;top:323.80px;width:9.50px;height:9.70px;border:1px solid #d2dae2;border-radius:2px;box-sizing:border-box;background:#fff;"></div>
<svg class="r" style="left:34px;top:325px" width="10" height="8" viewBox="0 0 10 8"><path d="M0.7 4 C1.45 1.75 3.05 0.95 4.85 0.95 C6.65 0.95 8.25 1.75 9.0 4 C8.25 6.25 6.65 7.05 4.85 7.05 C3.05 7.05 1.45 6.25 0.7 4 Z" fill="none" stroke="#3e4c57" stroke-width="1"/><circle cx="4.85" cy="4" r="1.4" fill="none" stroke="#3e4c57" stroke-width="0.95"/></svg>
<div class="r" style="left:79.00px;top:325.20px;width:7.00px;height:7.00px;background:#2a73a8;border-radius:50%;"></div>
<div class="t" style="left:91.25px;top:326.36px;font-size:8.2px;color:#2272b4;font-weight:400;letter-spacing:-0.080px;-webkit-text-stroke:0.06px #2272b4;">nervous-frog-730</div>
<svg class="r" style="left:193.60px;top:324.10px" width="10" height="10" viewBox="0 0 10 10"><circle cx="5" cy="5" r="4.0" fill="none" stroke="#3b8a55" stroke-width="1"/><path d="M3.4 5.2 L4.6 6.2 L6.6 4.0" fill="none" stroke="#3b8a55" stroke-width="1.05"/></svg>
<div class="t" style="left:208.00px;top:326.36px;font-size:8.2px;color:#11171c;font-weight:400;letter-spacing:-0.200px;-webkit-text-stroke:0.06px #11171c;">1 hour ago</div>
<div class="t" style="left:285.60px;top:326.36px;font-size:8.2px;color:#11171c;font-weight:400;letter-spacing:-0.200px;-webkit-text-stroke:0.06px #11171c;">5.8s</div>
<div class="t" style="left:334.00px;top:326.36px;font-size:8.2px;color:#11171c;font-weight:400;letter-spacing:-0.250px;-webkit-text-stroke:0.06px #11171c;">56.335399...</div>
<div class="t" style="left:395.20px;top:326.36px;font-size:8.2px;color:#11171c;font-weight:400;letter-spacing:-0.250px;-webkit-text-stroke:0.06px #11171c;">483.26090...</div>
<div class="r" style="left:188.20px;top:338.78px;width:89.30px;height:18.45px;background:#eff5fb;"></div>
<div class="r" style="left:277.10px;top:338.78px;width:0.80px;height:18.45px;background:#e1e8f0;"></div>
<div class="r" style="left:8.00px;top:357.23px;width:440.40px;height:1.00px;background:#e6e9ee;"></div>
<div class="r" style="left:13.00px;top:343.26px;width:9.50px;height:9.70px;border:1px solid #d2dae2;border-radius:2px;box-sizing:border-box;background:#fff;"></div>
<svg class="r" style="left:34px;top:344px" width="10" height="8" viewBox="0 0 10 8"><path d="M0.7 4 C1.45 1.75 3.05 0.95 4.85 0.95 C6.65 0.95 8.25 1.75 9.0 4 C8.25 6.25 6.65 7.05 4.85 7.05 C3.05 7.05 1.45 6.25 0.7 4 Z" fill="none" stroke="#3e4c57" stroke-width="1"/><circle cx="4.85" cy="4" r="1.4" fill="none" stroke="#3e4c57" stroke-width="0.95"/></svg>
<div class="r" style="left:79.00px;top:344.66px;width:7.00px;height:7.00px;background:#1a7a4e;border-radius:50%;"></div>
<div class="t" style="left:91.25px;top:345.82px;font-size:8.2px;color:#2272b4;font-weight:400;letter-spacing:-0.080px;-webkit-text-stroke:0.06px #2272b4;">nervous-snake-390</div>
<svg class="r" style="left:193.60px;top:343.56px" width="10" height="10" viewBox="0 0 10 10"><circle cx="5" cy="5" r="4.0" fill="none" stroke="#3b8a55" stroke-width="1"/><path d="M3.4 5.2 L4.6 6.2 L6.6 4.0" fill="none" stroke="#3b8a55" stroke-width="1.05"/></svg>
<div class="t" style="left:208.00px;top:345.82px;font-size:8.2px;color:#11171c;font-weight:400;letter-spacing:-0.200px;-webkit-text-stroke:0.06px #11171c;">1 hour ago</div>
<div class="t" style="left:285.60px;top:345.82px;font-size:8.2px;color:#11171c;font-weight:400;letter-spacing:-0.200px;-webkit-text-stroke:0.06px #11171c;">5.4s</div>
<div class="t" style="left:334.00px;top:345.82px;font-size:8.2px;color:#11171c;font-weight:400;letter-spacing:-0.250px;-webkit-text-stroke:0.06px #11171c;">-155.55159...</div>
<div class="t" style="left:395.20px;top:345.82px;font-size:8.2px;color:#11171c;font-weight:400;letter-spacing:-0.250px;-webkit-text-stroke:0.06px #11171c;">356.88575...</div>
<div class="r" style="left:188.20px;top:358.23px;width:89.30px;height:18.45px;background:#eff5fb;"></div>
<div class="r" style="left:277.10px;top:358.23px;width:0.80px;height:18.45px;background:#e1e8f0;"></div>
<div class="r" style="left:8.00px;top:376.69px;width:440.40px;height:1.00px;background:#e6e9ee;"></div>
<div class="r" style="left:13.00px;top:362.71px;width:9.50px;height:9.70px;border:1px solid #d2dae2;border-radius:2px;box-sizing:border-box;background:#fff;"></div>
<svg class="r" style="left:34px;top:364px" width="10" height="8" viewBox="0 0 10 8"><path d="M0.7 4 C1.45 1.75 3.05 0.95 4.85 0.95 C6.65 0.95 8.25 1.75 9.0 4 C8.25 6.25 6.65 7.05 4.85 7.05 C3.05 7.05 1.45 6.25 0.7 4 Z" fill="none" stroke="#3e4c57" stroke-width="1"/><circle cx="4.85" cy="4" r="1.4" fill="none" stroke="#3e4c57" stroke-width="0.95"/></svg>
<div class="r" style="left:79.00px;top:364.11px;width:7.00px;height:7.00px;background:#a8435e;border-radius:50%;"></div>
<div class="t" style="left:91.25px;top:365.27px;font-size:8.2px;color:#2272b4;font-weight:400;letter-spacing:-0.080px;-webkit-text-stroke:0.06px #2272b4;">bedecked-foal-963</div>
<svg class="r" style="left:193.60px;top:363.01px" width="10" height="10" viewBox="0 0 10 10"><circle cx="5" cy="5" r="4.0" fill="none" stroke="#3b8a55" stroke-width="1"/><path d="M3.4 5.2 L4.6 6.2 L6.6 4.0" fill="none" stroke="#3b8a55" stroke-width="1.05"/></svg>
<div class="t" style="left:208.00px;top:365.27px;font-size:8.2px;color:#11171c;font-weight:400;letter-spacing:-0.200px;-webkit-text-stroke:0.06px #11171c;">1 hour ago</div>
<div class="t" style="left:285.60px;top:365.27px;font-size:8.2px;color:#11171c;font-weight:400;letter-spacing:-0.200px;-webkit-text-stroke:0.06px #11171c;">4.8s</div>
<div class="t" style="left:334.00px;top:365.27px;font-size:8.2px;color:#11171c;font-weight:400;letter-spacing:-0.250px;-webkit-text-stroke:0.06px #11171c;">13.000272...</div>
<div class="t" style="left:395.20px;top:365.27px;font-size:8.2px;color:#11171c;font-weight:400;letter-spacing:-0.250px;-webkit-text-stroke:0.06px #11171c;">297.914225...</div>
<div class="r" style="left:188.20px;top:377.69px;width:89.30px;height:18.45px;background:#eff5fb;"></div>
<div class="r" style="left:277.10px;top:377.69px;width:0.80px;height:18.45px;background:#e1e8f0;"></div>
<div class="r" style="left:8.00px;top:396.14px;width:440.40px;height:1.00px;background:#e6e9ee;"></div>
<div class="r" style="left:13.00px;top:382.16px;width:9.50px;height:9.70px;border:1px solid #d2dae2;border-radius:2px;box-sizing:border-box;background:#fff;"></div>
<svg class="r" style="left:34px;top:383px" width="10" height="8" viewBox="0 0 10 8"><path d="M0.7 4 C1.45 1.75 3.05 0.95 4.85 0.95 C6.65 0.95 8.25 1.75 9.0 4 C8.25 6.25 6.65 7.05 4.85 7.05 C3.05 7.05 1.45 6.25 0.7 4 Z" fill="none" stroke="#3e4c57" stroke-width="1"/><circle cx="4.85" cy="4" r="1.4" fill="none" stroke="#3e4c57" stroke-width="0.95"/></svg>
<div class="r" style="left:79.00px;top:383.56px;width:7.00px;height:7.00px;background:#f7a712;border-radius:50%;"></div>
<div class="t" style="left:91.25px;top:384.72px;font-size:8.2px;color:#2272b4;font-weight:400;letter-spacing:-0.080px;-webkit-text-stroke:0.06px #2272b4;">amazing-goat-130</div>
<svg class="r" style="left:193.60px;top:382.46px" width="10" height="10" viewBox="0 0 10 10"><circle cx="5" cy="5" r="4.0" fill="none" stroke="#3b8a55" stroke-width="1"/><path d="M3.4 5.2 L4.6 6.2 L6.6 4.0" fill="none" stroke="#3b8a55" stroke-width="1.05"/></svg>
<div class="t" style="left:208.00px;top:384.72px;font-size:8.2px;color:#11171c;font-weight:400;letter-spacing:-0.200px;-webkit-text-stroke:0.06px #11171c;">1 hour ago</div>
<div class="t" style="left:285.60px;top:384.72px;font-size:8.2px;color:#11171c;font-weight:400;letter-spacing:-0.200px;-webkit-text-stroke:0.06px #11171c;">6.1s</div>
<div class="t" style="left:334.00px;top:384.72px;font-size:8.2px;color:#11171c;font-weight:400;letter-spacing:-0.250px;-webkit-text-stroke:0.06px #11171c;">156.50440...</div>
<div class="t" style="left:395.20px;top:384.72px;font-size:8.2px;color:#11171c;font-weight:400;letter-spacing:-0.250px;-webkit-text-stroke:0.06px #11171c;">5.0560247...</div>
<div class="r" style="left:188.20px;top:397.14px;width:89.30px;height:18.45px;background:#eff5fb;"></div>
<div class="r" style="left:277.10px;top:397.14px;width:0.80px;height:18.45px;background:#e1e8f0;"></div>
<div class="r" style="left:8.00px;top:415.59px;width:440.40px;height:1.00px;background:#e6e9ee;"></div>
<div class="r" style="left:13.00px;top:401.62px;width:9.50px;height:9.70px;border:1px solid #d2dae2;border-radius:2px;box-sizing:border-box;background:#fff;"></div>
<svg class="r" style="left:34px;top:403px" width="10" height="8" viewBox="0 0 10 8"><path d="M0.7 4 C1.45 1.75 3.05 0.95 4.85 0.95 C6.65 0.95 8.25 1.75 9.0 4 C8.25 6.25 6.65 7.05 4.85 7.05 C3.05 7.05 1.45 6.25 0.7 4 Z" fill="none" stroke="#3e4c57" stroke-width="1"/><circle cx="4.85" cy="4" r="1.4" fill="none" stroke="#3e4c57" stroke-width="0.95"/></svg>
<div class="r" style="left:79.00px;top:403.02px;width:7.00px;height:7.00px;background:#6e0a2a;border-radius:50%;"></div>
<div class="t" style="left:91.25px;top:404.18px;font-size:8.2px;color:#2272b4;font-weight:400;letter-spacing:-0.080px;-webkit-text-stroke:0.06px #2272b4;">powerful-seal-309</div>
<svg class="r" style="left:193.60px;top:401.92px" width="10" height="10" viewBox="0 0 10 10"><circle cx="5" cy="5" r="4.0" fill="none" stroke="#3b8a55" stroke-width="1"/><path d="M3.4 5.2 L4.6 6.2 L6.6 4.0" fill="none" stroke="#3b8a55" stroke-width="1.05"/></svg>
<div class="t" style="left:208.00px;top:404.18px;font-size:8.2px;color:#11171c;font-weight:400;letter-spacing:-0.200px;-webkit-text-stroke:0.06px #11171c;">1 hour ago</div>
<div class="t" style="left:285.60px;top:404.18px;font-size:8.2px;color:#11171c;font-weight:400;letter-spacing:-0.200px;-webkit-text-stroke:0.06px #11171c;">5.4s</div>
<div class="t" style="left:334.00px;top:404.18px;font-size:8.2px;color:#11171c;font-weight:400;letter-spacing:-0.250px;-webkit-text-stroke:0.06px #11171c;">141.63348...</div>
<div class="t" style="left:395.20px;top:404.18px;font-size:8.2px;color:#11171c;font-weight:400;letter-spacing:-0.250px;-webkit-text-stroke:0.06px #11171c;">290.57730...</div>
<div class="r" style="left:188.20px;top:416.59px;width:89.30px;height:18.45px;background:#eff5fb;"></div>
<div class="r" style="left:277.10px;top:416.59px;width:0.80px;height:18.45px;background:#e1e8f0;"></div>
<div class="r" style="left:8.00px;top:435.05px;width:440.40px;height:1.00px;background:#e6e9ee;"></div>
<div class="r" style="left:13.00px;top:421.07px;width:9.50px;height:9.70px;border:1px solid #d2dae2;border-radius:2px;box-sizing:border-box;background:#fff;"></div>
<svg class="r" style="left:34px;top:422px" width="10" height="8" viewBox="0 0 10 8"><path d="M0.7 4 C1.45 1.75 3.05 0.95 4.85 0.95 C6.65 0.95 8.25 1.75 9.0 4 C8.25 6.25 6.65 7.05 4.85 7.05 C3.05 7.05 1.45 6.25 0.7 4 Z" fill="none" stroke="#3e4c57" stroke-width="1"/><circle cx="4.85" cy="4" r="1.4" fill="none" stroke="#3e4c57" stroke-width="0.95"/></svg>
<div class="r" style="left:79.00px;top:422.47px;width:7.00px;height:7.00px;background:#197a4d;border-radius:50%;"></div>
<div class="t" style="left:91.25px;top:423.63px;font-size:8.2px;color:#2272b4;font-weight:400;letter-spacing:-0.080px;-webkit-text-stroke:0.06px #2272b4;">upset-trout-195</div>
<svg class="r" style="left:193.60px;top:421.37px" width="10" height="10" viewBox="0 0 10 10"><circle cx="5" cy="5" r="4.0" fill="none" stroke="#3b8a55" stroke-width="1"/><path d="M3.4 5.2 L4.6 6.2 L6.6 4.0" fill="none" stroke="#3b8a55" stroke-width="1.05"/></svg>
<div class="t" style="left:208.00px;top:423.63px;font-size:8.2px;color:#11171c;font-weight:400;letter-spacing:-0.200px;-webkit-text-stroke:0.06px #11171c;">1 hour ago</div>
<div class="t" style="left:285.60px;top:423.63px;font-size:8.2px;color:#11171c;font-weight:400;letter-spacing:-0.200px;-webkit-text-stroke:0.06px #11171c;">5.3s</div>
<div class="t" style="left:334.00px;top:423.63px;font-size:8.2px;color:#11171c;font-weight:400;letter-spacing:-0.250px;-webkit-text-stroke:0.06px #11171c;">-58.371532...</div>
<div class="t" style="left:395.20px;top:423.63px;font-size:8.2px;color:#11171c;font-weight:400;letter-spacing:-0.250px;-webkit-text-stroke:0.06px #11171c;">89.7130191...</div>
<div class="r" style="left:188.20px;top:436.05px;width:89.30px;height:18.45px;background:#eff5fb;"></div>
<div class="r" style="left:277.10px;top:436.05px;width:0.80px;height:18.45px;background:#e1e8f0;"></div>
<div class="r" style="left:8.00px;top:454.50px;width:440.40px;height:1.00px;background:#e6e9ee;"></div>
<div class="r" style="left:13.00px;top:440.52px;width:9.50px;height:9.70px;border:1px solid #d2dae2;border-radius:2px;box-sizing:border-box;background:#fff;"></div>
<svg class="r" style="left:34px;top:441px" width="10" height="8" viewBox="0 0 10 8"><path d="M0.7 4 C1.45 1.75 3.05 0.95 4.85 0.95 C6.65 0.95 8.25 1.75 9.0 4 C8.25 6.25 6.65 7.05 4.85 7.05 C3.05 7.05 1.45 6.25 0.7 4 Z" fill="none" stroke="#3e4c57" stroke-width="1"/><circle cx="4.85" cy="4" r="1.4" fill="none" stroke="#3e4c57" stroke-width="0.95"/></svg>
<div class="r" style="left:79.00px;top:441.92px;width:7.00px;height:7.00px;background:#f23b25;border-radius:50%;"></div>
<div class="t" style="left:91.25px;top:443.08px;font-size:8.2px;color:#2272b4;font-weight:400;letter-spacing:-0.080px;-webkit-text-stroke:0.06px #2272b4;">silent-chimp-68</div>
<svg class="r" style="left:193.60px;top:440.82px" width="10" height="10" viewBox="0 0 10 10"><circle cx="5" cy="5" r="4.0" fill="none" stroke="#3b8a55" stroke-width="1"/><path d="M3.4 5.2 L4.6 6.2 L6.6 4.0" fill="none" stroke="#3b8a55" stroke-width="1.05"/></svg>
<div class="t" style="left:208.00px;top:443.08px;font-size:8.2px;color:#11171c;font-weight:400;letter-spacing:-0.200px;-webkit-text-stroke:0.06px #11171c;">1 hour ago</div>
<div class="t" style="left:285.60px;top:443.08px;font-size:8.2px;color:#11171c;font-weight:400;letter-spacing:-0.200px;-webkit-text-stroke:0.06px #11171c;">6.2s</div>
<div class="t" style="left:334.00px;top:443.08px;font-size:8.2px;color:#11171c;font-weight:400;letter-spacing:-0.250px;-webkit-text-stroke:0.06px #11171c;">127.436181...</div>
<div class="t" style="left:395.20px;top:443.08px;font-size:8.2px;color:#11171c;font-weight:400;letter-spacing:-0.250px;-webkit-text-stroke:0.06px #11171c;">333.60821...</div>
<div class="r" style="left:448.00px;top:163.70px;width:0.90px;height:291.30px;background:#e6e9ee;"></div>
<div class="r" style="left:556.90px;top:163.70px;width:0.90px;height:291.30px;background:#e6e9ee;"></div>
<div class="r" style="left:8.00px;top:454.50px;width:550.00px;height:1.00px;background:#e6e9ee;"></div>
<svg class="r" style="left:462.5px;top:303.5px" width="11" height="11" viewBox="0 0 11 11"><circle cx="5.5" cy="5.5" r="4.55" fill="none" stroke="#46525d" stroke-width="0.95"/><path d="M5.5 3.75 V7.25 M3.75 5.5 H7.25" stroke="#5d6975" stroke-width="1.1"/></svg>
<div class="t" style="left:487.30px;top:300.86px;font-size:8.2px;color:#5f7281;font-weight:400;letter-spacing:-0.111px;-webkit-text-stroke:0.15px #5f7281;">Show more</div>
<div class="t" style="left:474.80px;top:312.66px;font-size:8.2px;color:#5f7281;font-weight:400;letter-spacing:0.012px;-webkit-text-stroke:0.15px #5f7281;">columns (19 total)</div>
<div class="r" style="left:8.00px;top:535.80px;width:945.00px;height:1.00px;background:#e4e8ee;"></div>
<div class="t" style="left:8.00px;top:540.96px;font-size:8.2px;color:#11171c;font-weight:400;letter-spacing:-0.150px;-webkit-text-stroke:0.12px #11171c;"><b>15</b> matching runs</div>
<svg class="r" style="left:954px;top:544.8px" width="6" height="7" viewBox="0 0 6 7"><path d="M2.6 2.2 Q4 1.6 6 2 V4.6 Q4 5 3.2 4.6 Q2.4 3.8 2.6 2.2 Z" fill="#111"/><path d="M3.6 5 L5 5.2 L4.6 7 L3.2 7 Z" fill="#888"/></svg>
</body></html>
